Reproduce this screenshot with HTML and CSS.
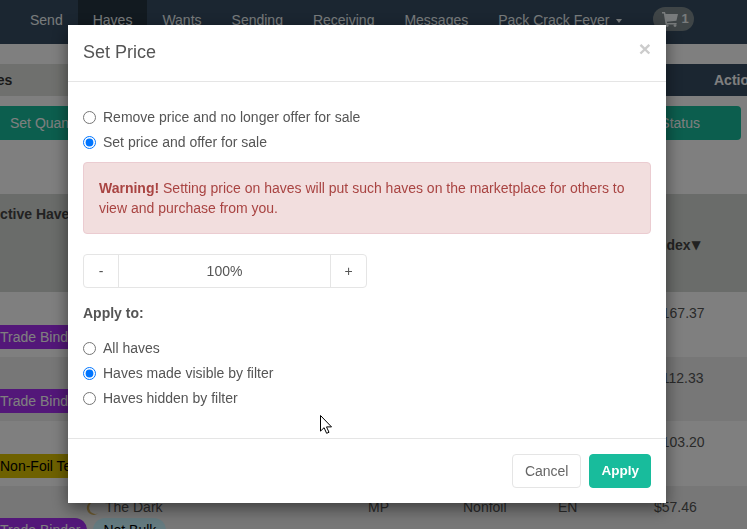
FILE: index.html
```html
<!DOCTYPE html>
<html lang="en">
<head>
<meta charset="utf-8">
<title>Set Price</title>
<link rel="stylesheet" href="styles.css">
</head>
<body>
<div class="page">
  <nav class="navbar">
    <a class="nav-item">Send</a>
    <a class="nav-item active">Haves</a>
    <a class="nav-item">Wants</a>
    <a class="nav-item">Sending</a>
    <a class="nav-item">Receiving</a>
    <a class="nav-item">Messages</a>
    <a class="nav-item">Pack Crack Fever <span class="caret"></span></a>
    <span class="cart">
      <svg class="cart-icon" viewBox="0 0 16 15" width="16" height="15"><path d="M0 0h3l.6 2H16l-1.6 6.8-9.6 1 .3 1.2h9.5v1.4H3.6L1.8 1.4H0z" fill="currentColor"/><circle cx="5.2" cy="13.6" r="1.4" fill="currentColor"/><circle cx="13" cy="13.6" r="1.4" fill="currentColor"/></svg>
      <b>1</b>
    </span>
  </nav>
  <div class="band">
    <span class="band-left"><b>Manage Haves</b></span>
    <span class="band-right"><b>Actions</b></span>
  </div>
  <div class="actions">
    <span>Set Quantity</span>
    <span>Set Status</span>
  </div>
  <div class="table">
    <div class="thead">
      <b class="thead-title">Active Haves</b>
      <b class="thead-index">Index<span class="sort">▼</span></b>
    </div>
    <div class="row">
      <div class="cell-card"><div class="card-title"></div><div class="pills"><span class="pill purple">Trade Binder</span></div></div>
      <div></div><div></div><div></div><div>$167.37</div>
    </div>
    <div class="row alt">
      <div class="cell-card"><div class="card-title"></div><div class="pills"><span class="pill purple">Trade Binder</span></div></div>
      <div></div><div></div><div></div><div>$112.33</div>
    </div>
    <div class="row">
      <div class="cell-card"><div class="card-title"></div><div class="pills"><span class="pill yellow">Non-Foil Tech</span></div></div>
      <div></div><div></div><div></div><div>$103.20</div>
    </div>
    <div class="row alt">
      <div class="cell-card">
        <div class="card-title">
          <svg class="set-icon" viewBox="0 0 14 14" width="14" height="14"><path d="M10 .5A6.9 6.9 0 1 0 12.5 12 6.2 6.2 0 1 1 10 .5z" fill="#d4b060"/></svg>
          The Dark
        </div>
        <div class="pills"><span class="pill purple">Trade Binder</span><span class="pill blue">Not Bulk</span></div>
      </div>
      <div>MP</div><div>Nonfoil</div><div>EN</div><div>$57.46</div>
    </div>
  </div>
</div>
<div class="backdrop"></div>
<div class="modal">
  <header class="modal-header">
    <h4 class="modal-title">Set Price</h4>
    <span class="close">×</span>
  </header>
  <div class="modal-body">
    <div class="radio-group">
      <label class="radio"><input type="radio" name="mode">Remove price and no longer offer for sale</label>
      <label class="radio"><input type="radio" name="mode" checked>Set price and offer for sale</label>
    </div>
    <div class="alert"><b>Warning!</b> Setting price on haves will put such haves on the marketplace for others to view and purchase from you.</div>
    <div class="stepper">
      <span class="step">-</span>
      <span class="step-value">100%</span>
      <span class="step">+</span>
    </div>
    <p class="apply-label">Apply to:</p>
    <div class="radio-group">
      <label class="radio"><input type="radio" name="scope">All haves</label>
      <label class="radio"><input type="radio" name="scope" checked>Haves made visible by filter</label>
      <label class="radio"><input type="radio" name="scope">Haves hidden by filter</label>
    </div>
  </div>
  <footer class="modal-footer">
    <button class="btn btn-default">Cancel</button>
    <button class="btn btn-primary">Apply</button>
  </footer>
</div>
<svg class="cursor" viewBox="0 0 13 19" width="13" height="19"><path d="M.5.5v15.6l3.6-3.4 2.5 5.6 2.4-1-2.5-5.4h5z" fill="#fff" stroke="#000" stroke-width="1"/></svg>
</body>
</html>
```

FILE: styles.css
```css
* { box-sizing: border-box; }
html, body { margin: 0; height: 100%; overflow: hidden; }
body {
  font-family: "Liberation Sans", Arial, sans-serif;
  font-size: 14px;
  line-height: 20px;
  color: #555;
  background: #fff;
}
.page { width: 760px; }
.navbar {
  display: flex;
  align-items: center;
  height: 44px;
  padding-left: 15px;
  background: #364c62;
  color: #f0f6f8;
}
.nav-item { display: flex; align-items: center; height: 100%; padding: 0 15px 5px; }
.nav-item.active { background: #243440; }
.caret {
  display: inline-block;
  margin-left: 7px;
  margin-top: 2px;
  border-top: 4px solid currentColor;
  border-left: 3.5px solid transparent;
  border-right: 3.5px solid transparent;
}
.cart {
  display: flex;
  align-items: center;
  gap: 3px;
  width: 41px;
  height: 24px;
  margin: 0 0 6px 16px;
  padding-left: 9px;
  border-radius: 12px;
  background: #7e8a8e;
}
.cart b { font-size: 13px; }
.cart-icon { display: block; }
.band {
  display: flex;
  height: 32px;
  margin: 20px 0 10px -60px;
  line-height: 32px;
  color: #333;
}
.band-left { flex: 1; background: #dfe1dc; }
.band-right { width: 94px; background: #364c62; color: #fff; }
.band-right b { margin-left: 48px; }
.band-left b { margin-left: -25px; }
.actions {
  display: flex;
  justify-content: space-between;
  width: 741px;
  height: 34px;
  padding: 0 41px 0 10px;
  border-radius: 0 4px 4px 0;
  background: #18bc9c;
  color: #fff;
  line-height: 34px;
}
.table { margin-top: 54px; color: #555; }
.thead {
  display: grid;
  grid-template-columns: 654px 1fr;
  height: 98px;
  background: #d4d8d4;
  color: #444;
}
.thead-title { margin: 10px 0 0 -10px; white-space: nowrap; }
.thead-index { display: flex; align-items: center; align-self: center; margin-top: 4px; }
.sort { margin-left: 1px; font-family: "DejaVu Sans", sans-serif; font-size: 12px; font-weight: 400; }
.row {
  display: grid;
  grid-template-columns: 368px 95px 95px 96px 1fr;
  height: 64.5px;
  padding-top: 11px;
  background: #fff;
  white-space: nowrap;
}
.row.alt { background: #eee; }
.cell-card { min-width: 0; }
.card-title { display: flex; align-items: center; gap: 5px; height: 20px; padding-left: 86px; }
.set-icon { display: block; margin-top: 2px; }
.pills { display: flex; gap: 6px; margin: 1.5px 0 0 -11px; }
.pill {
  display: block;
  height: 24px;
  padding: 2px 7px 2px 11px;
  border-radius: 12px;
  line-height: 20px;
}
.purple { background: #a62ef2; color: #fff; }
.yellow { background: #dcc200; color: #000; }
.blue { padding: 2px 10px; background: #c8f4ff; color: #000; }
.backdrop {
  position: fixed;
  inset: 0;
  background: rgba(0, 0, 0, .5);
}
.modal {
  position: fixed;
  top: 25px;
  left: 68px;
  width: 598px;
  background: #fff;
  box-shadow: 0 5px 15px rgba(0, 0, 0, .5);
}
.modal-header {
  display: flex;
  justify-content: space-between;
  padding: 15px 15px 16px;
  border-bottom: 1px solid #e5e5e5;
}
.modal-title { margin: 0; font-size: 18px; font-weight: 400; line-height: 25px; }
.close { margin-top: -2px; font-size: 21px; font-weight: 700; line-height: 21px; color: #ccc; }
.modal-body { padding: 25px 15px 30px; }
.radio-group { display: flex; flex-direction: column; gap: 5px; }
.radio { display: flex; align-items: center; gap: 7px; height: 20px; }
.radio input { width: 13px; height: 13px; margin: 0; }
.alert {
  margin: 10px 0 20px;
  padding: 15px;
  border: 1px solid #ebccd1;
  border-radius: 4px;
  background: #f2dede;
  color: #a94442;
}
.stepper {
  display: grid;
  grid-template-columns: 34px 1fr 35px;
  width: 284px;
  height: 34px;
  border: 1px solid #e5e5e5;
  border-radius: 4px;
  line-height: 32px;
  text-align: center;
}
.step-value { border-left: 1px solid #e5e5e5; border-right: 1px solid #e5e5e5; }
.apply-label { margin: 15px 0; font-weight: 700; }
.modal-footer {
  display: flex;
  justify-content: flex-end;
  gap: 8px;
  padding: 15px;
  border-top: 1px solid #e5e5e5;
}
.btn {
  height: 34px;
  padding: 0 12px;
  border: 1px solid transparent;
  border-radius: 4px;
  font: inherit;
}
.btn-default { background: #fff; border-color: #e5e5e5; color: #666; }
.btn-primary { padding: 0 11px; background: #18bc9c; border-color: #18bc9c; color: #fff; font-size: 13.5px; font-weight: 700; }
.cursor { position: fixed; top: 415px; left: 320px; }
```
